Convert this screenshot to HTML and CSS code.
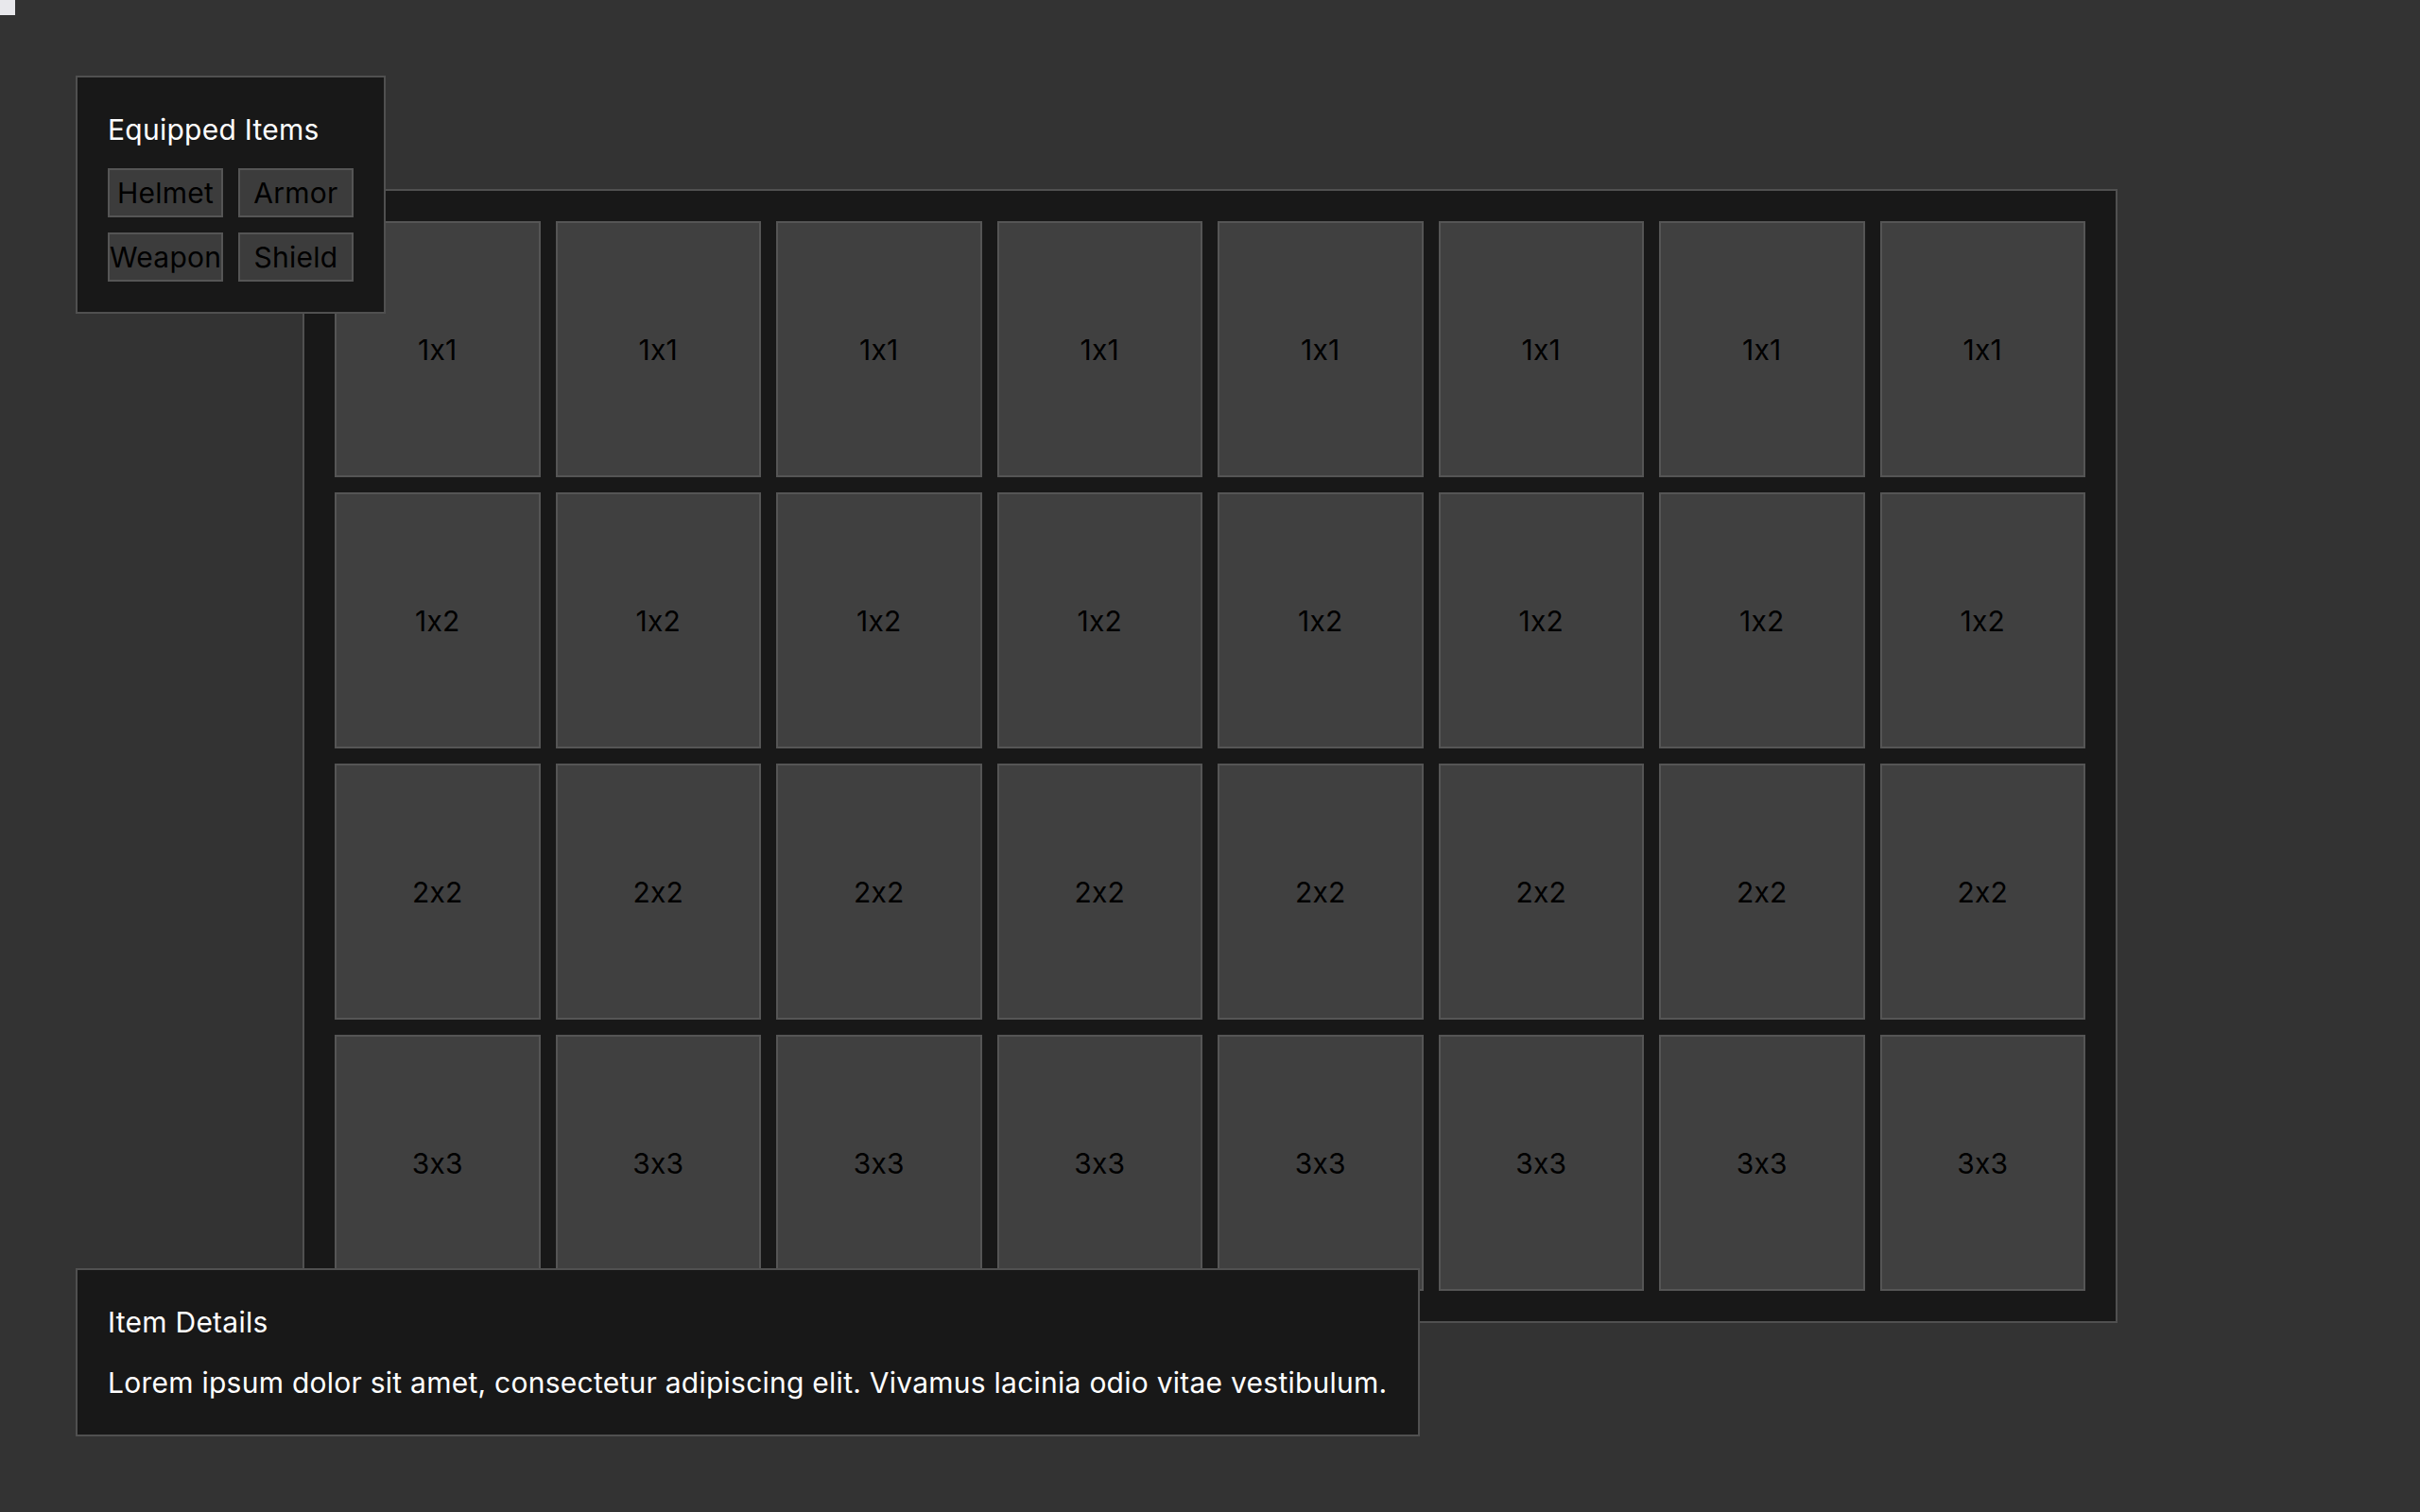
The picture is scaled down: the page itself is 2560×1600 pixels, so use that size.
FILE: index.html
```html
<!DOCTYPE html>
<html lang="en">
<head>
  <meta charset="UTF-8">
  <title>Inventory</title>
  <link rel="stylesheet" href="styles.css">
</head>
<body>
  <div class="cursor-dot"></div>

  <div class="equipment">
    <div class="panel-title">Equipped Items</div>
    <div class="slots">
      <button class="slot">Helmet</button>
      <button class="slot">Armor</button>
      <button class="slot">Weapon</button>
      <button class="slot">Shield</button>
    </div>
  </div>

  <div class="inventory" id="inventory"></div>

  <div class="details">
    <div class="panel-title">Item Details</div>
    <p class="details-text">Lorem ipsum dolor sit amet, consectetur adipiscing elit. Vivamus lacinia odio vitae vestibulum.</p>
  </div>

  <script>
    // one row of cells per item size
    const sizes = ["1x1", "1x2", "2x2", "3x3"];
    const inventoryEl = document.getElementById("inventory");

    sizes.forEach(size => {
      for (let i = 0; i < 8; i++) {
        const cell = document.createElement("div");
        cell.className = "cell";
        cell.textContent = size;
        inventoryEl.appendChild(cell);
      }
    });
  </script>
</body>
</html>
```

FILE: styles.css
```css
html, body {
  margin: 0;
  height: 100%;
}
body {
  font-family: 'Inter', 'Noto Sans', sans-serif;
  font-feature-settings: "calt" 0;
  letter-spacing: 0.25px;
  background: #333333;
  display: flex;
  align-items: center;
  justify-content: center;
  position: relative;
}
.cursor-dot {
  position: absolute;
  top: 0;
  left: 0;
  width: 16px;
  height: 16px;
  background: #e8e8ec;
}
.inventory {
  box-sizing: border-box;
  width: 1920px;
  height: 1200px;
  padding: 32px;
  background: #181818;
  border: 2px solid #505050;
  display: grid;
  grid-template-columns: repeat(8, 1fr);
  grid-template-rows: repeat(4, 1fr);
  gap: 16px;
}
.cell {
  background: #404040;
  border: 2px solid #555;
  display: flex;
  align-items: center;
  justify-content: center;
  font-size: 30px;
  color: #000;
}
.equipment, .details {
  position: absolute;
  left: 80px;
  background: #181818;
  border: 2px solid #505050;
  padding: 32px;
  color: #fff;
  z-index: 2;
}
.equipment {
  top: 80px;
}
.details {
  bottom: 80px;
}
.panel-title {
  font-size: 30px;
  line-height: 46px;
  margin-bottom: 18px;
}
.slots {
  display: grid;
  grid-template-columns: 122px 122px;
  gap: 16px;
}
.slot {
  height: 52px;
  padding: 0;
  font-family: inherit;
  font-size: 30px;
  letter-spacing: inherit;
  color: #000;
  background: #3c3c3c;
  border: 2px solid #555;
  overflow: hidden;
  white-space: nowrap;
}
.details-text {
  margin: 0;
  font-size: 30px;
  line-height: 46px;
}
```
